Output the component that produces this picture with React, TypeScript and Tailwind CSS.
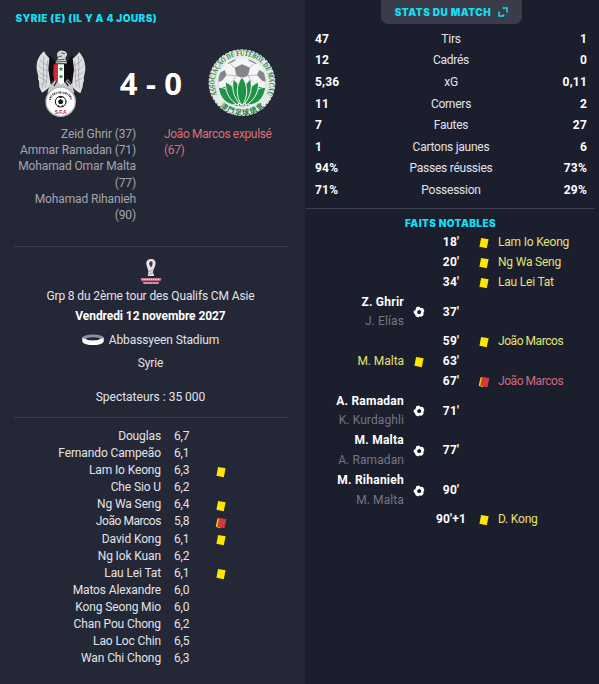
import clsx from "clsx";

type Card = "yellow" | "red";

interface MatchEvent {
  time: string;
  side: "home" | "away";
  kind: Card | "goal";
  player: string;
  assist?: string;
}

const HOME_SCORERS = [
  "Zeid Ghrir (37)",
  "Ammar Ramadan (71)",
  "Mohamad Omar Malta",
  "(77)",
  "Mohamad Rihanieh",
  "(90)",
];

const PLAYERS: { name: string; rating: string; card?: Card }[] = [
  { name: "Douglas", rating: "6,7" },
  { name: "Fernando Campeão", rating: "6,1" },
  { name: "Lam Io Keong", rating: "6,3", card: "yellow" },
  { name: "Che Sio U", rating: "6,2" },
  { name: "Ng Wa Seng", rating: "6,4", card: "yellow" },
  { name: "João Marcos", rating: "5,8", card: "red" },
  { name: "David Kong", rating: "6,1", card: "yellow" },
  { name: "Ng Iok Kuan", rating: "6,2" },
  { name: "Lau Lei Tat", rating: "6,1", card: "yellow" },
  { name: "Matos Alexandre", rating: "6,0" },
  { name: "Kong Seong Mio", rating: "6,0" },
  { name: "Chan Pou Chong", rating: "6,2" },
  { name: "Lao Loc Chin", rating: "6,5" },
  { name: "Wan Chi Chong", rating: "6,3" },
];

const STATS = [
  ["47", "Tirs", "1"],
  ["12", "Cadrés", "0"],
  ["5,36", "xG", "0,11"],
  ["11", "Corners", "2"],
  ["7", "Fautes", "27"],
  ["1", "Cartons jaunes", "6"],
  ["94%", "Passes réussies", "73%"],
  ["71%", "Possession", "29%"],
];

const EVENTS: MatchEvent[] = [
  { time: "18'", side: "away", kind: "yellow", player: "Lam Io Keong" },
  { time: "20'", side: "away", kind: "yellow", player: "Ng Wa Seng" },
  { time: "34'", side: "away", kind: "yellow", player: "Lau Lei Tat" },
  { time: "37'", side: "home", kind: "goal", player: "Z. Ghrir", assist: "J. Elías" },
  { time: "59'", side: "away", kind: "yellow", player: "João Marcos" },
  { time: "63'", side: "home", kind: "yellow", player: "M. Malta" },
  { time: "67'", side: "away", kind: "red", player: "João Marcos" },
  { time: "71'", side: "home", kind: "goal", player: "A. Ramadan", assist: "K. Kurdaghli" },
  { time: "77'", side: "home", kind: "goal", player: "M. Malta", assist: "A. Ramadan" },
  { time: "90'", side: "home", kind: "goal", player: "M. Rihanieh", assist: "M. Malta" },
  { time: "90'+1", side: "away", kind: "yellow", player: "D. Kong" },
];

const CardIcon = ({ card }: { card: Card }) => (
  <svg width="12" height="12" viewBox="0 0 12 12" className="shrink-0">
    {card === "yellow" ? (
      <path d="M3.1 0.9 10.6 2.3 8.8 11.2 1.4 9.8Z" fill="#ffe600" />
    ) : (
      <>
        <path d="M2.6 1.2 7 2 5.2 11.2 0.7 9.7Z" fill="#ffd21f" />
        <path d="M4 0.8 11.4 2.2 9.4 11.3 2.2 9.7Z" fill="#d63a3a" />
      </>
    )}
  </svg>
);

const GoalIcon = () => (
  <svg width="12" height="12" viewBox="0 0 12 12" className="shrink-0">
    <circle cx="6" cy="6" r="5.4" fill="#fff" />
    <path
      d="M6.3 3.8 8.3 5.3 7.5 7.9H4.8L4.1 5.5Z M0 4.6 2.2 4.6 3.2 2 1.4 0.6 0 2Z M6 0 7.4 1.9 9.8 1.6 9.4 0Z M12 5 10.3 6.7 11 9.2 12 9Z M5.2 12 6.6 10.2 8.8 11.2 8.6 12Z M0 7.2 2 8 2.6 10.4 0 11Z"
      fill="#1b1e2d"
    />
  </svg>
);

const SyriaCrest = () => (
  <svg width="52" height="69" viewBox="105 145 156 207">
    {/* Wings */}
    <path
      d="M132 152C118 164 108 180 110 206C112 220 117 224 114 236C120 244 116 252 119 262L126 276C137 271 148 262 154 248L158 182C150 174 138 166 132 152Z"
      fill="#e0e0e1"
    />
    <path
      d="M237 154C248 166 256 180 256 204C255 220 250 226 252 240C247 248 250 258 246 264L241 278C229 272 217 262 211 248L207 182C216 174 230 168 237 154Z"
      fill="#e0e0e1"
    />
    <path
      d="M121 176C126 190 138 190 148 196M116 192C124 208 136 206 146 212M115 210C124 224 134 222 143 228M118 228C126 236 133 236 141 242M122 252C130 250 134 246 138 240M132 166C128 200 134 236 126 264M143 180C138 206 144 234 136 260M245 176C240 190 228 190 218 196M251 192C242 208 231 206 221 212M250 212C241 224 232 222 222 228M247 232C240 238 232 238 224 242M235 166C239 200 232 236 240 264M224 180C229 206 222 234 231 260"
      fill="none"
      stroke="#97999e"
      strokeWidth="2"
    />
    {/* Body */}
    <path d="M149 164 167 184 165 248 152 252 145 206Z M217 164 201 184 203 248 216 252 222 206Z" fill="#0e0f13" />
    <path d="M171 163C171 154 178 149 188 150C199 151 203 158 200 166L196 172 201 188 166 188 174 173Z" fill="#d6d6d7" />
    <path d="M184 157 195 159M174 169 186 166M172 178 194 176M168 184 200 182" stroke="#54565c" strokeWidth="3" fill="none" />
    <path d="M150 250 164 236 203 236 216 250 223 276 142 276Z" fill="#c9cacc" />
    <path d="M163 238 153 250M170 242 162 256M202 240 213 251M196 243 205 256" stroke="#26272c" strokeWidth="4" />
    {/* Shield */}
    <path d="M161 191H174V245C164 240 160 232 160 222Z" fill="#d92735" />
    <path d="M174 191H192V246L183 251 174 245Z" fill="#fff" />
    <path d="M192 191H205V222C205 232 201 241 192 246Z" fill="#111217" />
    <path
      d="M183 198l2 4.600h5l-3.800 3.200 1.400 5-4.600-3-4.600 3 1.400-5-3.800-3.200h5ZM183 221l2 4.600h5l-3.800 3.200 1.400 5-4.600-3-4.600 3 1.400-5-3.800-3.200h5Z"
      fill="#16834d"
    />
    {/* Federation badge */}
    <circle cx="182" cy="303" r="46" fill="#b5b6b8" />
    <circle cx="182" cy="303" r="42" fill="#fff" />
    <path d="M150 298C151 268 213 268 214 298" fill="none" stroke="#4a4a50" strokeWidth="6" strokeDasharray="3 2 5 2 2 3" />
    <circle cx="182" cy="303" r="16" fill="#fff" stroke="#15161b" strokeWidth="3" />
    <path
      d="M182 295 190 301 187 310H177L174 301ZM173 289 182 286 191 289 182 292ZM165 299 168 305 166 312ZM199 299 196 305 198 312ZM173 318 176 312 180 319ZM191 318 188 312 184 319Z"
      fill="#15161b"
    />
    <text
      x="182"
      y="341"
      textAnchor="middle"
      fill="#d3202f"
      fontFamily="Liberation Sans, sans-serif"
      fontWeight="700"
      fontSize="15"
    >
      S.F.A
    </text>
  </svg>
);

const MacauCrest = () => (
  <svg width="68" height="70" viewBox="624 145 204 210">
    <defs>
      <path id="ring-top" d="M652 285A82 82 0 1 1 800 285" />
      <path id="ring-bottom" d="M640 292A96 96 0 0 0 812 292" />
      <clipPath id="ball-clip">
        <circle cx="726" cy="247" r="71" />
      </clipPath>
    </defs>
    <circle cx="726" cy="249" r="84" fill="none" stroke="#e6ebe7" strokeWidth="26" />
    <circle cx="726" cy="249" r="98" fill="none" stroke="#dfe5e1" strokeWidth="4" strokeDasharray="9 3" />
    <circle cx="726" cy="247" r="72" fill="#f5f5f6" />
    <g clipPath="url(#ball-clip)">
      <path
        d="M704 204 726 194 750 204 744 228 726 235 709 228ZM655 222 674 211 680 226 666 243 652 248ZM797 222 778 211 771 226 786 243 800 248ZM677 188 692 176 712 175 704 184 685 193ZM775 188 760 176 740 175 748 184 767 193Z"
        fill="#85868b"
      />
      <path
        d="M704 204 692 193M750 204 760 193M709 228 694 248M744 228 758 248M680 226 709 228M771 226 744 228"
        stroke="#b9babf"
        strokeWidth="3"
      />
      <path d="M650 262H802V330H650Z" fill="#1f8f45" />
    </g>
    {/* Lotus */}
    <g fill="#1f9348" stroke="#eef5f0" strokeWidth="3" strokeLinejoin="round">
      <path d="M655 263C676 262 697 276 708 316C680 316 659 296 655 263Z" />
      <path d="M797 263C776 262 755 276 744 316C772 316 793 296 797 263Z" />
      <path d="M676 247C700 256 714 278 716 317C690 304 676 280 676 247Z" />
      <path d="M776 247C752 256 738 278 736 317C762 304 776 280 776 247Z" />
      <path d="M700 238C718 252 728 274 724 317C702 298 694 268 700 238Z" />
      <path d="M752 238C734 252 724 274 728 317C750 298 758 268 752 238Z" />
      <path d="M726 232C746 258 744 292 726 318C708 292 706 258 726 232Z" />
    </g>
    <text fill="#1b7f40" fontFamily="Liberation Serif, serif" fontWeight="700" fontSize="22">
      <textPath href="#ring-top" textLength="330" lengthAdjust="spacingAndGlyphs">
        ASSOCIAÇÃO DE FUTEBOL DE MACAU
      </textPath>
    </text>
    <text fill="#1b7f40" fontFamily="Noto Sans CJK TC, sans-serif" fontWeight="700" fontSize="21">
      <textPath href="#ring-bottom" startOffset="50%" textAnchor="middle" textLength="144">
        澳門足球總會
      </textPath>
    </text>
  </svg>
);

const WorldCupLogo = () => (
  <svg width="22" height="27" viewBox="0 0 22 27">
    <path
      d="M11 1C7.6 1 6 3.3 6.3 6C6.6 9 8.6 11.5 8.4 14.5L7.6 18H14.2L13 14.5C13 11.5 15.2 9 15.6 6C15.9 3 14.2 1 11 1Z"
      fill="#e6dfe4"
    />
    <path d="M11.2 3.2C9.4 3.4 8.8 5 9.4 6.8L11 9.6C12.6 7.6 13.4 3.4 11.2 3.2Z" fill="#3a3947" />
    <path d="M9 13.6 13 11.8M8.6 16.8 12.8 14.6" stroke="#9b8290" strokeWidth="0.8" />
    <path d="M0.4 20H21.6L20.6 23.2H1.4ZM3 24H19V26H3Z" fill="#b76b80" />
    <path d="M2 21.4H20M4 25H18" stroke="#f1dce2" strokeWidth="1.1" strokeDasharray="1.4 0.8" />
  </svg>
);

const StadiumIcon = () => (
  <svg width="22" height="12" viewBox="0 0 22 12">
    <path d="M0.3 3.6V7.4C1.4 12.2 20.6 12.2 21.7 7.4V3.6Z" fill="#fff" />
    <ellipse cx="11" cy="4" rx="10.7" ry="3.4" fill="#8d909c" />
    <path d="M0.3 4.2C2 9.4 20 9.4 21.7 4.2L18 5H4Z" fill="#fff" />
    <ellipse cx="11" cy="4.8" rx="7.2" ry="1.6" fill="#242735" />
  </svg>
);

const PopOutIcon = () => (
  <svg width="10" height="10" viewBox="0 0 10 10" fill="none" stroke="#12dff2" strokeWidth="1.5">
    <path d="M4.5 1H9V5.5M1 4.5V9H5.5V7.2" />
  </svg>
);

const EventRow = ({ event }: { event: MatchEvent }) => {
  const icon = event.kind === "goal" ? <GoalIcon /> : <CardIcon card={event.kind} />;
  const home = event.side === "home";
  return (
    <div
      className={clsx(
        "grid grid-cols-[98px_30px_34px_30px_1fr] items-center leading-[19.8px]",
        event.assist ? "h-[39.6px]" : "h-[19.8px]",
      )}
    >
      <div className="text-right whitespace-nowrap">
        {home && (
          <>
            <div
              className={
                event.kind === "goal"
                  ? "font-bold tracking-[0.25px] text-white"
                  : "tracking-[-0.05px] text-[#e6e078]"
              }
            >
              {event.player}
            </div>
            {event.assist && <div className="tracking-[0.1px] text-[#747783]">{event.assist}</div>}
          </>
        )}
      </div>
      <div className="flex justify-center">{home && icon}</div>
      <div className="flex justify-center font-bold tracking-[0.2px] whitespace-nowrap text-white">
        {event.time}
      </div>
      <div className="flex justify-center pl-[1px]">{!home && icon}</div>
      <div
        className={clsx(
          event.player === "João Marcos" ? "tracking-[-0.45px]" : "tracking-[-0.2px]",
          event.kind === "red" ? "text-[#d6677a]" : "text-[#e6e078]",
        )}
      >
        {!home && event.player}
      </div>
    </div>
  );
};

export default function App() {
  return (
    <div className="flex h-[684px] w-[599px] overflow-hidden bg-[#1b1e2d] font-['Roboto',sans-serif] text-[12px] tracking-[-0.12px] text-[#e2e3e8]">
      {/* Match summary */}
      <section className="flex w-[305px] shrink-0 flex-col bg-[#242735] px-[14px]">
        <h2 className="mt-[9px] h-[18px] pl-[1.5px] font-['Inter',sans-serif] text-[10px] leading-[18px] font-black tracking-[0.45px] whitespace-nowrap text-[#12dff2]">
          SYRIE (E) (IL Y A 4 JOURS)
        </h2>
        <div className="mt-[21px] flex h-[70px] items-center">
          <div className="ml-[21px]">
            <SyriaCrest />
          </div>
          <div className="w-[128px] text-center font-['Open_Sans',sans-serif] text-[31px] leading-[68px] font-bold tracking-[0.2px] text-white">
            4 - 0
          </div>
          <div className="-ml-[7px]">
            <MacauCrest />
          </div>
        </div>
        <div className="mt-[8px] flex h-[98px] leading-[16.2px] whitespace-nowrap text-[#a3a5af]">
          <div className="w-[122px] text-right">
            {HOME_SCORERS.map((line) => (
              <div key={line}>{line}</div>
            ))}
          </div>
          <div className="ml-[28px] tracking-[-0.35px] text-[#dd6f78]">
            João Marcos expulsé
            <br />
            (67)
          </div>
        </div>

        <div className="mt-[22px] flex h-[171px] w-[273px] flex-col items-center border-t border-[#3c3f4c]">
          <div className="mt-[11px]">
            <WorldCupLogo />
          </div>
          <div className="mt-[1px] leading-[20px]">Grp 8 du 2ème tour des Qualifs CM Asie</div>
          <div className="leading-[20px] font-bold tracking-[-0.08px] text-white">
            Vendredi 12 novembre 2027
          </div>
          <div className="mt-[4px] flex items-center gap-[5px] leading-[20px]">
            <StadiumIcon />
            Abbassyeen Stadium
          </div>
          <div className="mt-[3px] leading-[20px]">Syrie</div>
          <div className="mt-[14px] leading-[20px] tracking-[0px]">Spectateurs : 35 000</div>
        </div>

        <div className="w-[273px] border-t border-[#3c3f4c] pt-[10px]">
          {PLAYERS.map(({ name, rating, card }) => (
            <div
              key={name}
              className="grid h-[17.1px] grid-cols-[147px_28px_1fr] items-center gap-x-[13px] leading-[17.1px]"
            >
              <div className={clsx("text-right", name === "João Marcos" && "tracking-[-0.45px]")}>
                {name}
              </div>
              <div>{rating}</div>
              <div className="pt-[2px]">{card && <CardIcon card={card} />}</div>
            </div>
          ))}
        </div>
      </section>

      {/* Stats and key events */}
      <section className="flex flex-1 flex-col">
        <div className="ml-[76px] flex h-[24px] w-[141px] items-center justify-center gap-[7px] rounded-b-[7px] bg-[#3a3c4a] font-['Inter',sans-serif] text-[10px] font-black tracking-[0.5px] text-[#12dff2]">
          STATS DU MATCH
          <PopOutIcon />
        </div>
        <div className="mt-[4px] pr-[12px] pl-[10px]">
          {STATS.map(([home, label, away]) => (
            <div key={label} className="grid h-[21.6px] grid-cols-[60px_1fr_60px] items-center">
              <div className="font-bold tracking-[0.2px] text-white">{home}</div>
              <div className="text-center tracking-[-0.25px]">{label}</div>
              <div className="text-right font-bold tracking-[0.2px] text-white">{away}</div>
            </div>
          ))}
        </div>
        <div className="mt-[7px] mr-[4px] ml-[1px] border-t border-[#3c3f4c] pt-[5px]">
          <h2 className="h-[19.5px] text-center font-['Inter',sans-serif] text-[10px] leading-[19px] font-black tracking-[0.4px] text-[#12dff2]">
            FAITS NOTABLES
          </h2>
          {EVENTS.map((event) => (
            <EventRow key={event.time} event={event} />
          ))}
        </div>
      </section>
    </div>
  );
}
